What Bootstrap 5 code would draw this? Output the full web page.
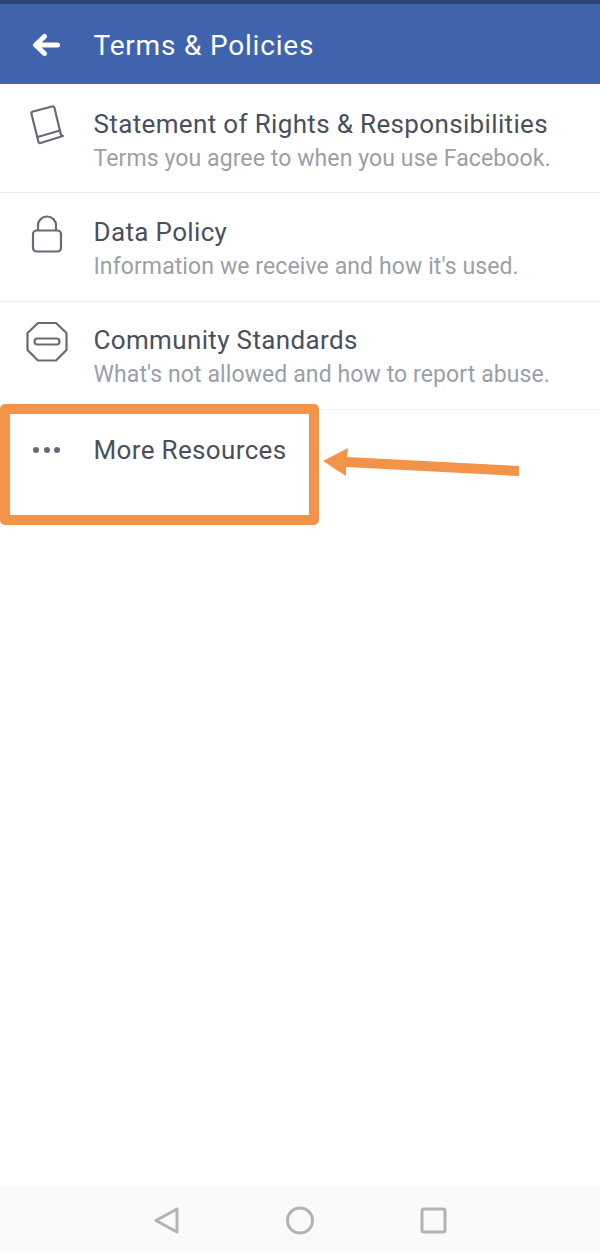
<!DOCTYPE html>
<html lang="en">
<head>
<meta charset="utf-8">
<title>Terms &amp; Policies</title>
<link href="https://cdn.jsdelivr.net/npm/bootstrap@5.3.0/dist/css/bootstrap.min.css" rel="stylesheet">
<style>
html,body{height:100%;}
body{font-family:Roboto,"Liberation Sans",sans-serif;background:#fff;overflow:hidden;}
.phone-shell{height:1254px;position:relative;}
.status-strip{height:4px;background:#2f4578;}
.app-head{height:80px;background:#3f64ad;color:#fff;}
.back-slot{width:93.5px;padding-left:32px;padding-top:2px;}
.app-title{font-size:28px;line-height:1;margin:0;font-weight:400;letter-spacing:.8px;padding-top:3px;}
.policy-row{height:109px;border-bottom:1px solid #eceef0;}
.policy-row.row-last{height:108px;}
.policy-row.plain{border-bottom:0;}
.icon-slot{width:93.5px;flex:none;padding-left:24px;padding-top:18px;}
.row-text{padding-top:24px;}
.row-text.up-one{padding-top:23px;}
.row-text.up-two{padding-top:22px;}
.row-title{font-size:26px;line-height:33px;color:#4b4f5c;letter-spacing:.35px;}
.row-sub{font-size:23px;line-height:35px;color:#9a9fa9;letter-spacing:.1px;}
.nav-strip{height:67px;background:#fafafa;margin-top:auto;margin-bottom:1px;}
.annot-box{position:absolute;left:0;top:404px;width:319px;height:121px;border:10px solid #f29349;border-radius:5px;}
.annot-arrow{position:absolute;left:320px;top:446px;}
</style>
</head>
<body>
<div class="phone-shell d-flex flex-column">
  <div class="status-strip"></div>
  <div class="app-head d-flex align-items-center">
    <div class="back-slot d-flex">
      <svg width="30" height="24" viewBox="0 0 30 24"><path d="M12.500 3.500 L3.500 12 L12.500 20.500 M5 12 H25.500" fill="none" stroke="#fff" stroke-width="5" stroke-linecap="round" stroke-linejoin="round"/></svg>
    </div>
    <h1 class="app-title">Terms &amp; Policies</h1>
  </div>
  <div class="policy-row d-flex">
    <div class="icon-slot">
      <svg width="44" height="44" viewBox="0 0 44 44"><g fill="none" stroke="#666b76" stroke-width="2.2" stroke-linejoin="round" stroke-linecap="round"><path d="M9 9.500 L28 4.500 Q30 4 30.500 6 L37 33 L39 34 L16.500 41 Q15 41.500 14.500 40 L7.500 12 Q7 10 9 9.500 Z"/><path d="M13.500 35 L36 28.500"/></g></svg>
    </div>
    <div class="row-text">
      <div class="row-title">Statement of Rights &amp; Responsibilities</div>
      <div class="row-sub">Terms you agree to when you use Facebook.</div>
    </div>
  </div>
  <div class="policy-row d-flex">
    <div class="icon-slot">
      <svg width="44" height="44" viewBox="0 0 44 44"><g fill="none" stroke="#666b76" stroke-width="2.2" stroke-linejoin="round"><rect x="9" y="19.500" width="28" height="21" rx="3.500"/><path d="M14 19.500 V14.500 a9 9 0 0 1 18 0 V19.500"/></g></svg>
    </div>
    <div class="row-text up-one">
      <div class="row-title">Data Policy</div>
      <div class="row-sub">Information we receive and how it's used.</div>
    </div>
  </div>
  <div class="policy-row row-last d-flex">
    <div class="icon-slot">
      <svg width="46" height="44" viewBox="0 0 46 44"><g fill="none" stroke="#666b76" stroke-width="2.2" stroke-linejoin="round"><path d="M14 3 H32 L42.500 13 V30 L32 40.500 H14 L3.500 30 V13 Z"/><rect x="10.500" y="18.500" width="25" height="6" rx="3"/></g></svg>
    </div>
    <div class="row-text up-two">
      <div class="row-title">Community Standards</div>
      <div class="row-sub">What's not allowed and how to report abuse.</div>
    </div>
  </div>
  <div class="policy-row plain d-flex">
    <div class="icon-slot">
      <svg width="44" height="44" viewBox="0 0 44 44"><g fill="#666b76"><circle cx="12" cy="22" r="3"/><circle cx="23" cy="22" r="3"/><circle cx="33" cy="22" r="3"/></g></svg>
    </div>
    <div class="row-text">
      <div class="row-title">More Resources</div>
    </div>
  </div>
  <div class="nav-strip d-flex align-items-center justify-content-center">
    <svg width="330" height="44" viewBox="0 0 330 44"><g fill="none" stroke="#b3b3b3" stroke-width="3" stroke-linejoin="round"><path d="M42 11 V34 L21 22.500 Z"/><circle cx="165" cy="22.500" r="12.500"/><rect x="287" y="11" width="23" height="23" rx="2"/></g></svg>
  </div>
  <div class="annot-box"></div>
  <svg class="annot-arrow" width="204" height="36" viewBox="0 0 204 36"><path d="M3 15 L28 2 L27 11 L199 20 L199 30 L26 21 L26 30 Z" fill="#f29349"/></svg>
</div>
</body>
</html>
